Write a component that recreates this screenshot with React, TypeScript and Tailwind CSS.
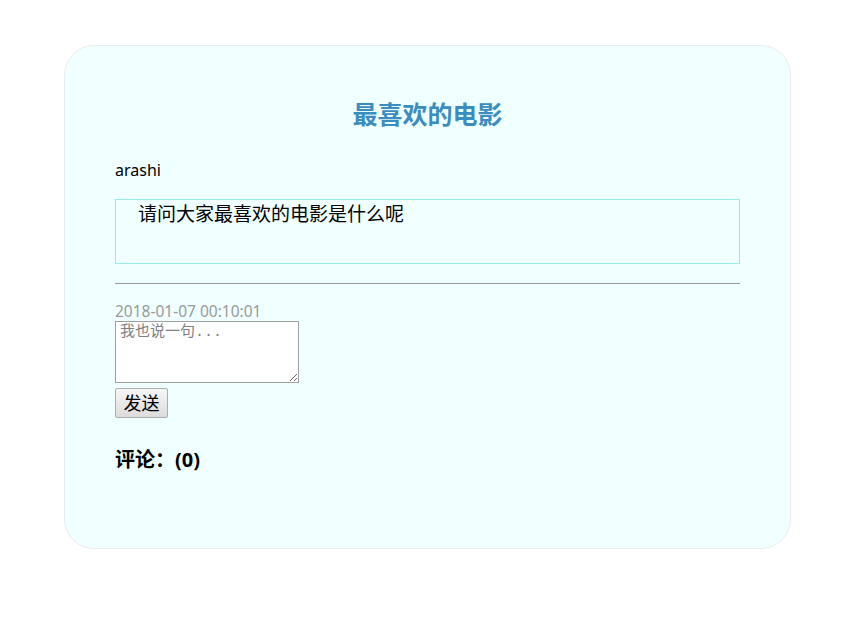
export default function App() {
  return (
    <div className="min-h-screen bg-white pt-[45px] font-['Noto_Sans','Noto_Sans_CJK_SC',sans-serif] text-black">
      {/* Post card */}
      <div className="ml-[64px] w-[727px] rounded-[30px] border border-[#ebebeb] bg-[#f0ffff] px-[50px] pt-[52px] pb-[75px]">
        <h2 className="text-center text-[25px] font-bold leading-[32px] text-[#3a8dc0]">最喜欢的电影</h2>

        <p className="mt-[28px] text-[16px] leading-[24px]">arashi</p>

        <div className="mt-[17px] h-[65px] border border-[#98ecec] pl-[22px] pt-[1px] text-[19px] leading-[27px]">
          请问大家最喜欢的电影是什么呢
        </div>

        <hr className="mt-[19px] border-0 border-t border-[#999]" />

        <p className="mt-[17px] text-[15.5px] leading-[20px] text-[#9a9a9a]">2018-01-07 00:10:01</p>

        <textarea
          placeholder="我也说一句..."
          className="block h-[62px] w-[184px] border border-[#a0a0a0] bg-white px-[4px] py-[1px] font-['Liberation_Mono','Noto_Sans_CJK_SC',monospace] text-[15px] leading-[20px] placeholder:text-[#808080]"
        />

        <button className="mt-[5px] block h-[30px] w-[53px] rounded-[2px] border border-[#adadad] bg-gradient-to-b from-[#f6f6f6] to-[#dcdcdc] text-[18px] leading-[26px]">
          发送
        </button>

        <h3 className="mt-[29px] text-[20px] font-bold leading-[26px]">评论：(0)</h3>
      </div>
    </div>
  );
}
